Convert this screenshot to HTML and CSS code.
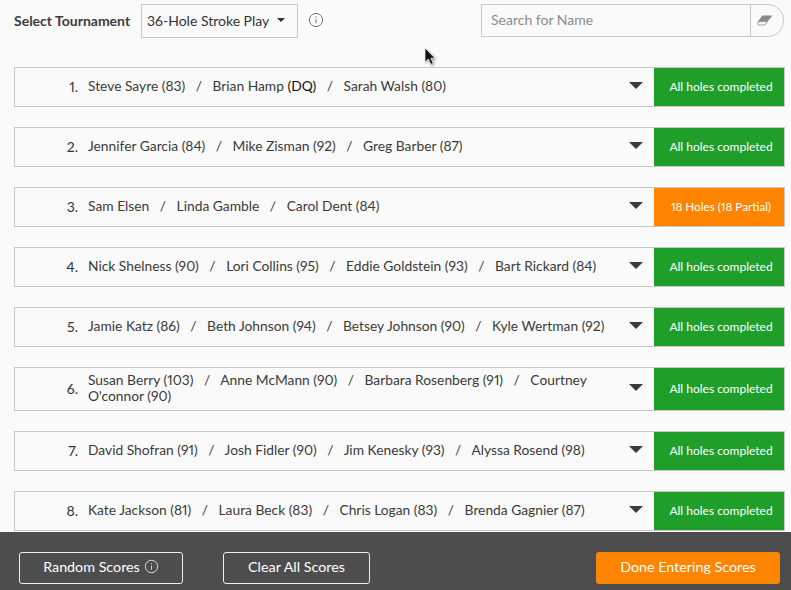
FILE: index.html
```html
<!DOCTYPE html>
<html lang="en">
<head>
<meta charset="utf-8">
<title>Select Tournament</title>
<link rel="stylesheet" href="styles.css">
</head>
<body>
<div class="page">
  <main class="main">
    <header class="top">
      <label class="top-label">Select Tournament</label>
      <div class="select"><span>36-Hole Stroke Play</span><i class="caret"></i></div>
      <svg class="info" viewBox="0 0 16 16"><circle cx="8" cy="8" r="6.6"/><path d="M8 7v4.4M8 4.4v1.2"/></svg>
      <div class="search">
        <div class="search-field">Search for Name</div>
        <div class="search-btn"><svg class="eraser" viewBox="0 0 16 11"><path class="e1" d="M5.4 .5H15.5L10.6 6.6H.9z"/><path class="e2" d="M.9 6.6H10.6L8 10H1z"/></svg></div>
      </div>
    </header>
    <div class="rows">
      <div class="row"><div class="num">1.</div><div class="names"><span>Steve Sayre (83)</span> <b>/</b> <span>Brian Hamp <em>(DQ)</em></span> <b>/</b> <span>Sarah Walsh (80)</span></div><i class="arrow"></i><div class="status done">All holes completed</div></div>
      <div class="row"><div class="num">2.</div><div class="names"><span>Jennifer Garcia (84)</span> <b>/</b> <span>Mike Zisman (92)</span> <b>/</b> <span>Greg Barber (87)</span></div><i class="arrow"></i><div class="status done">All holes completed</div></div>
      <div class="row"><div class="num">3.</div><div class="names"><span>Sam Elsen</span> <b>/</b> <span>Linda Gamble</span> <b>/</b> <span>Carol Dent (84)</span></div><i class="arrow"></i><div class="status partial">18 Holes (18 Partial)</div></div>
      <div class="row"><div class="num">4.</div><div class="names"><span>Nick Shelness (90)</span> <b>/</b> <span>Lori Collins (95)</span> <b>/</b> <span>Eddie Goldstein (93)</span> <b>/</b> <span>Bart Rickard (84)</span></div><i class="arrow"></i><div class="status done">All holes completed</div></div>
      <div class="row"><div class="num">5.</div><div class="names"><span>Jamie Katz (86)</span> <b>/</b> <span>Beth Johnson (94)</span> <b>/</b> <span>Betsey Johnson (90)</span> <b>/</b> <span>Kyle Wertman (92)</span></div><i class="arrow"></i><div class="status done">All holes completed</div></div>
      <div class="row tall"><div class="num">6.</div><div class="names"><span>Susan Berry (103)</span> <b>/</b> <span>Anne McMann (90)</span> <b>/</b> <span>Barbara Rosenberg (91)</span> <b>/</b> Courtney<br>O'connor (90)</div><i class="arrow"></i><div class="status done">All holes completed</div></div>
      <div class="row"><div class="num">7.</div><div class="names"><span>David Shofran (91)</span> <b>/</b> <span>Josh Fidler (90)</span> <b>/</b> <span>Jim Kenesky (93)</span> <b>/</b> <span>Alyssa Rosend (98)</span></div><i class="arrow"></i><div class="status done">All holes completed</div></div>
      <div class="row"><div class="num">8.</div><div class="names"><span>Kate Jackson (81)</span> <b>/</b> <span>Laura Beck (83)</span> <b>/</b> <span>Chris Logan (83)</span> <b>/</b> <span>Brenda Gagnier (87)</span></div><i class="arrow"></i><div class="status done">All holes completed</div></div>
    </div>
  </main>
  <footer class="footer">
    <button class="btn outline random">Random Scores <svg class="info light" viewBox="0 0 16 16"><circle cx="8" cy="8" r="6.6"/><path d="M8 7v4.4M8 4.4v1.2"/></svg></button>
    <button class="btn outline clear">Clear All Scores</button>
    <button class="btn primary">Done Entering Scores</button>
  </footer>
  <svg class="cursor" viewBox="0 0 14 20"><path d="M1 1v14l3.4-3 2.4 5.4 2.4-1-2.4-5.2H11z"/></svg>
</div>
</body>
</html>
```
FILE: styles.css
```css
* { box-sizing: border-box; }
html, body { margin: 0; padding: 0; }
body { font-family: "Lato", "Liberation Sans", sans-serif; color: #333; background: #fafafa; font-variant-numeric: proportional-nums; }
.page { position: relative; width: 791px; height: 590px; overflow: hidden; display: flex; flex-direction: column; }
.main { flex: 1; min-height: 0; overflow: hidden; padding: 4px 6px 0 14px; }
.top { display: flex; align-items: flex-start; height: 63px; }
.top-label { font-size: 14px; font-weight: 700; color: #3c3c3c; margin-top: 8px; width: 127px; }
.select { width: 157px; height: 34px; border: 1px solid #c8c8c8; display: flex; align-items: center; padding: 0 5px 2px; font-size: 14px; color: #333; gap: 8px; }
.caret { width: 0; height: 0; border-left: 4px solid transparent; border-right: 4px solid transparent; border-top: 4px solid #333; }
.info { width: 16px; height: 16px; fill: none; stroke: #666; stroke-width: .9; }
.top > .info { margin: 8px 0 0 10px; }
.search { margin-left: auto; margin-right: 1px; width: 303px; height: 33px; display: flex; border: 1px solid #c8c8c8; border-radius: 0 16px 16px 0; }
.search-field { flex: 1; padding: 0 9px; line-height: 29px; font-size: 14px; color: #8c8c8c; }
.search-btn { width: 33px; border-left: 1px solid #c8c8c8; display: flex; align-items: center; padding-left: 6px; }
.eraser { width: 16px; height: 11px; }
.e1 { fill: #8a8a8a; }
.e2 { fill: #fafafa; stroke: #8a8a8a; stroke-width: .8; }
.rows { display: flex; flex-direction: column; gap: 20px; }
.row { display: flex; align-items: center; height: 40px; border: 1px solid #c8c8c8; flex: none; }
.row.tall { height: 44px; }
.num { width: 63px; text-align: right; font-size: 14px; margin-right: 10px; padding-bottom: 2px; }
.names { flex: 1; font-size: 13.8px; line-height: 16px; color: #3a3a3a; padding-bottom: 2px; }
.names b { font-weight: 400; margin: 0 7px; }
.names em { font-style: normal; color: #111; }
.arrow { width: 0; height: 0; border-left: 7px solid transparent; border-right: 7px solid transparent; border-top: 7px solid #3a3a3a; margin: -3px 11px 0 0; }
.status { width: 130px; align-self: stretch; color: #fff; font-size: 12px; display: flex; align-items: center; justify-content: center; padding: 0 0 2px 4px; }
.done { background: #1f9e2a; }
.partial { background: #ff8400; font-size: 11.7px; }
.footer { height: 58px; flex: none; background: #4d4d4d; display: flex; align-items: flex-start; padding: 20px 11px 0 19px; }
.btn { height: 32px; border-radius: 3px; font-family: inherit; font-size: 14.3px; color: #fff; background: none; display: flex; align-items: center; justify-content: center; gap: 4px; padding: 0 0 3px; }
.outline { border: 1px solid #eee; }
.random { width: 164px; }
.clear { width: 147px; margin-left: 40px; }
.primary { width: 184px; margin-left: auto; background: #ff8400; border: 0; }
.info.light { width: 15px; height: 15px; stroke: #eee; margin-top: -1px; }
.cursor { position: absolute; left: 424px; top: 47px; width: 14px; height: 20px; fill: #111; stroke: #fff; stroke-width: .7; filter: drop-shadow(1px 1px 1px rgba(0,0,0,.4)); }
```
